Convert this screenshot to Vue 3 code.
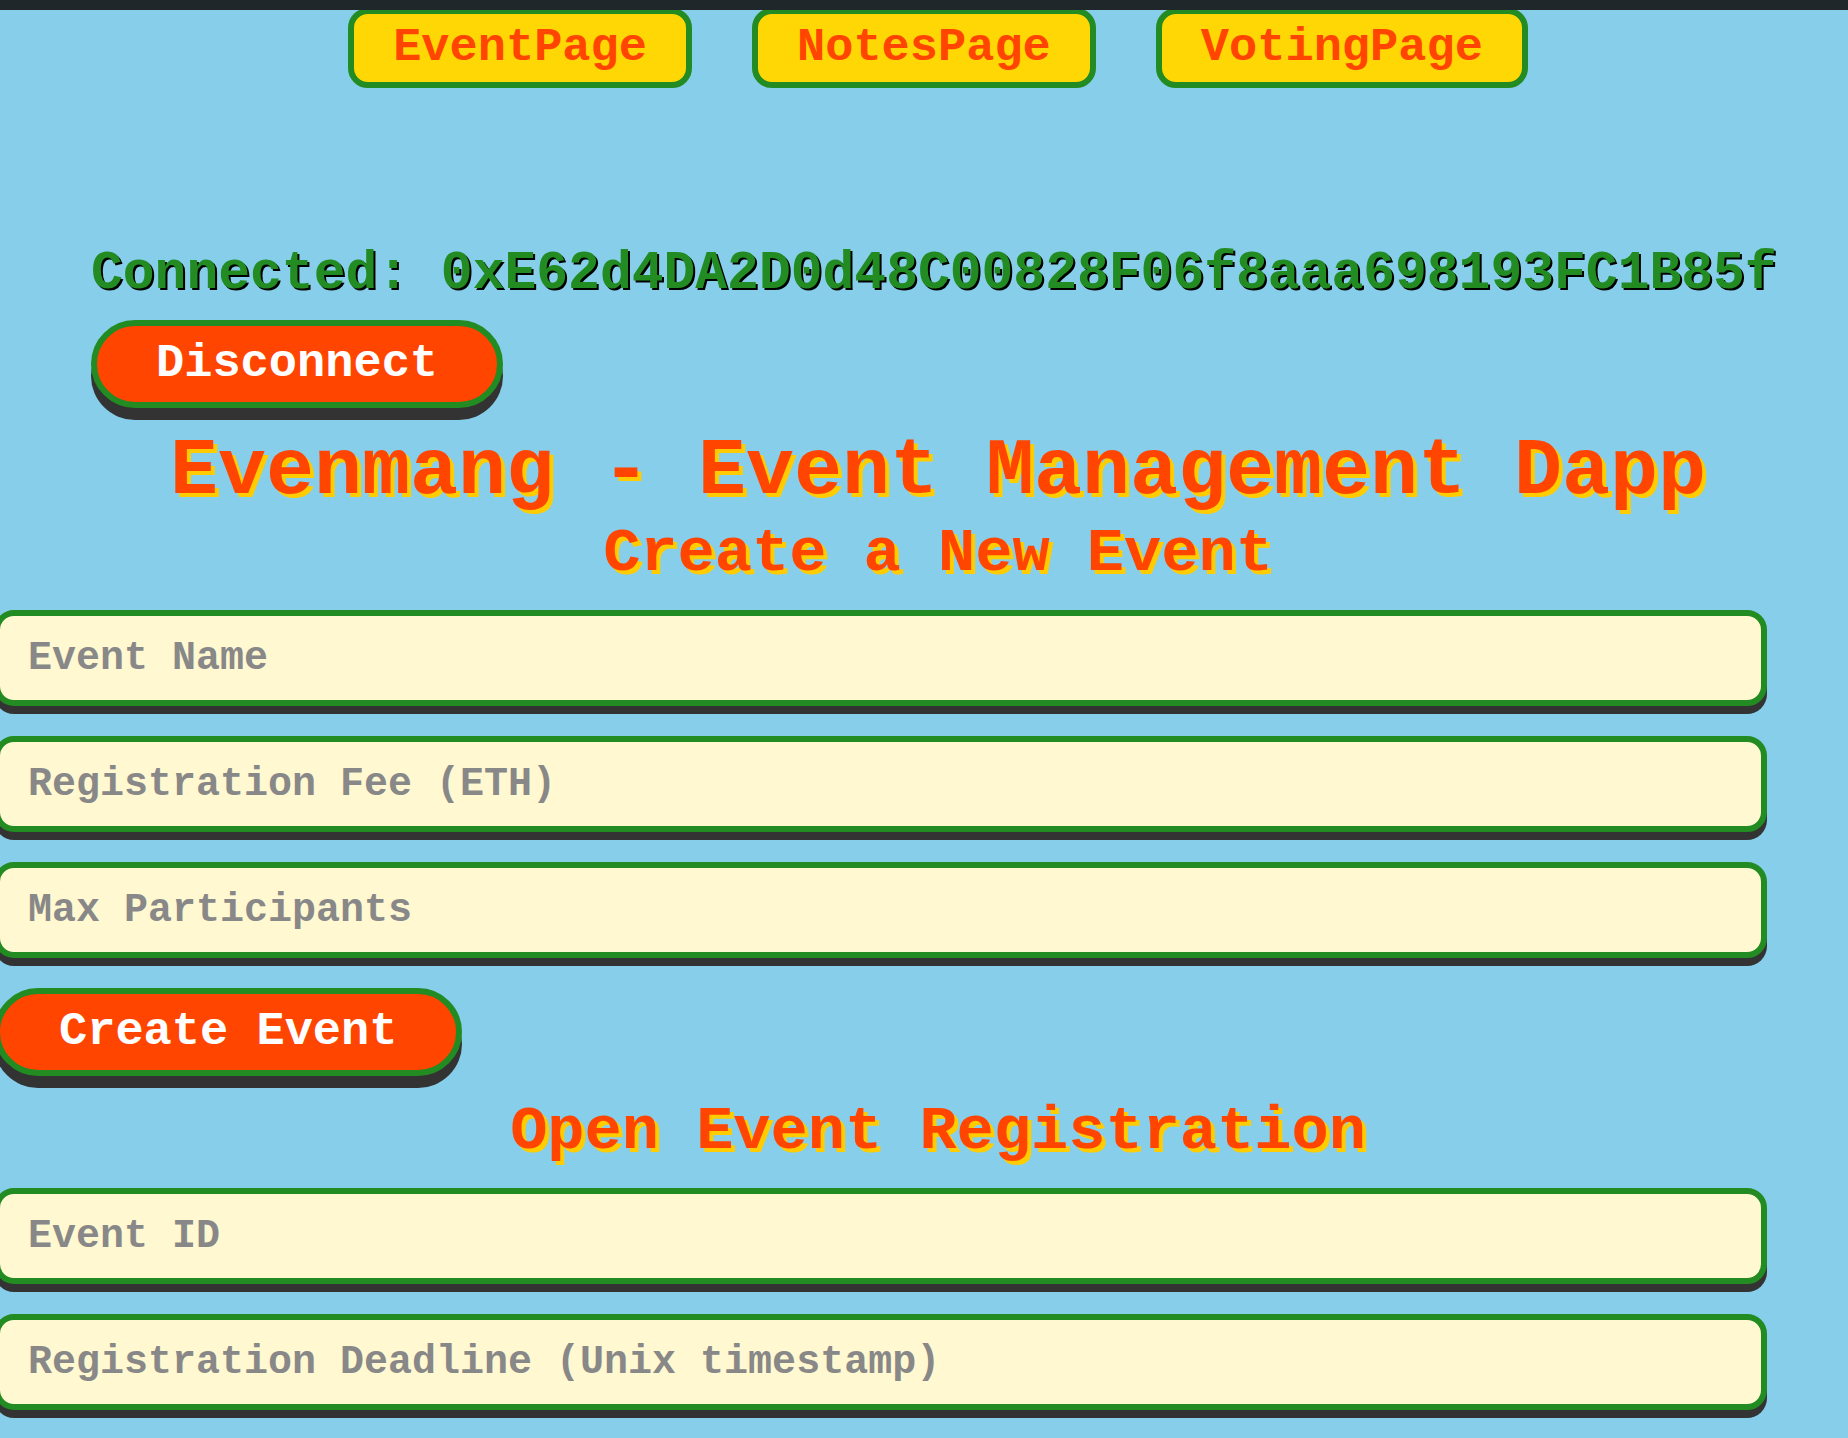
<script setup>
import { reactive } from 'vue'

const pages = ['EventPage', 'NotesPage', 'VotingPage']
const account = '0xE62d4DA2D0d48C00828F06f8aaa698193FC1B85f'

const form = reactive({
  name: '',
  fee: '',
  max: '',
  eventId: '',
  deadline: '',
})
</script>

<template>
  <div class="app">
    <div class="topbar"></div>
    <div class="page">
      <nav class="nav">
        <a v-for="page in pages" :key="page" class="nav-link" :href="'#' + page">{{ page }}</a>
      </nav>

      <section class="wallet">
        <p class="account">Connected: {{ account }}</p>
        <button type="button" class="btn">Disconnect</button>
      </section>

      <main>
        <h1>Evenmang - Event Management Dapp</h1>

        <h2>Create a New Event</h2>
        <form class="form" @submit.prevent>
          <input v-model="form.name" class="field" type="text" placeholder="Event Name" aria-label="Event Name" />
          <input v-model="form.fee" class="field" type="text" placeholder="Registration Fee (ETH)" aria-label="Registration Fee (ETH)" />
          <input v-model="form.max" class="field" type="text" placeholder="Max Participants" aria-label="Max Participants" />
          <button type="submit" class="btn">Create Event</button>
        </form>

        <h2>Open Event Registration</h2>
        <form class="form" @submit.prevent>
          <input v-model="form.eventId" class="field" type="text" placeholder="Event ID" aria-label="Event ID" />
          <input v-model="form.deadline" class="field" type="text" placeholder="Registration Deadline (Unix timestamp)" aria-label="Registration Deadline (Unix timestamp)" />
        </form>
      </main>
    </div>
  </div>
</template>

<style>
body {
  background: #87ceeb;
}
</style>

<style scoped>
.app {
  min-height: 100vh;
  overflow: hidden;
  background: #87ceeb;
  font-family: "Liberation Mono", monospace;
  font-weight: 700;
}

.topbar {
  position: relative;
  z-index: 1;
  height: 10px;
  background: #20272a;
}

/* The content column is slightly wider than the window on both sides */
.page {
  margin: -2px -34px 0 -6px;
}

.nav {
  display: flex;
  justify-content: center;
  gap: 60px;
}

.nav-link {
  box-sizing: border-box;
  height: 80px;
  padding: 0 39px;
  border: 6px solid #228b22;
  border-radius: 20px;
  background: #ffd705;
  color: #ff4500;
  font-size: 47px;
  line-height: 68px;
  text-decoration: none;
  white-space: nowrap;
}

.wallet {
  padding: 156px 0 0 97px;
}

.account {
  margin: 0 0 16px;
  color: #228b22;
  font-size: 53px;
  line-height: 60px;
  white-space: nowrap;
  text-shadow: 2px 2px 0 #000;
}

.btn {
  display: block;
  box-sizing: border-box;
  height: 88px;
  padding: 0 59px;
  border: 6px solid #228b22;
  border-radius: 44px;
  background: #ff4500;
  box-shadow: 0 12px 0 #333;
  color: #fff;
  font: inherit;
  font-size: 47px;
  line-height: 76px;
  white-space: nowrap;
  cursor: pointer;
}

h1,
h2 {
  margin: 0;
  color: #ff4500;
  text-align: center;
  text-shadow: 4px 4px 0 #fc0;
}

h1 {
  margin: 24px 0 12px;
  font-size: 80px;
  line-height: 80px;
}

h2 {
  margin-bottom: 26px;
  font-size: 62px;
  line-height: 60px;
}

.form {
  display: flex;
  flex-direction: column;
  align-items: flex-start;
  gap: 30px;
  margin-bottom: 26px;
  padding-right: 115px;
}

.field {
  box-sizing: border-box;
  width: 100%;
  height: 96px;
  padding: 0 28px;
  border: 6px solid #228b22;
  border-radius: 20px;
  outline: none;
  background: #fff8d0;
  box-shadow: 0 8px 0 #333;
  color: #333;
  font: inherit;
  font-size: 40px;
}

.field::placeholder {
  color: #888;
  opacity: 1;
}
</style>
